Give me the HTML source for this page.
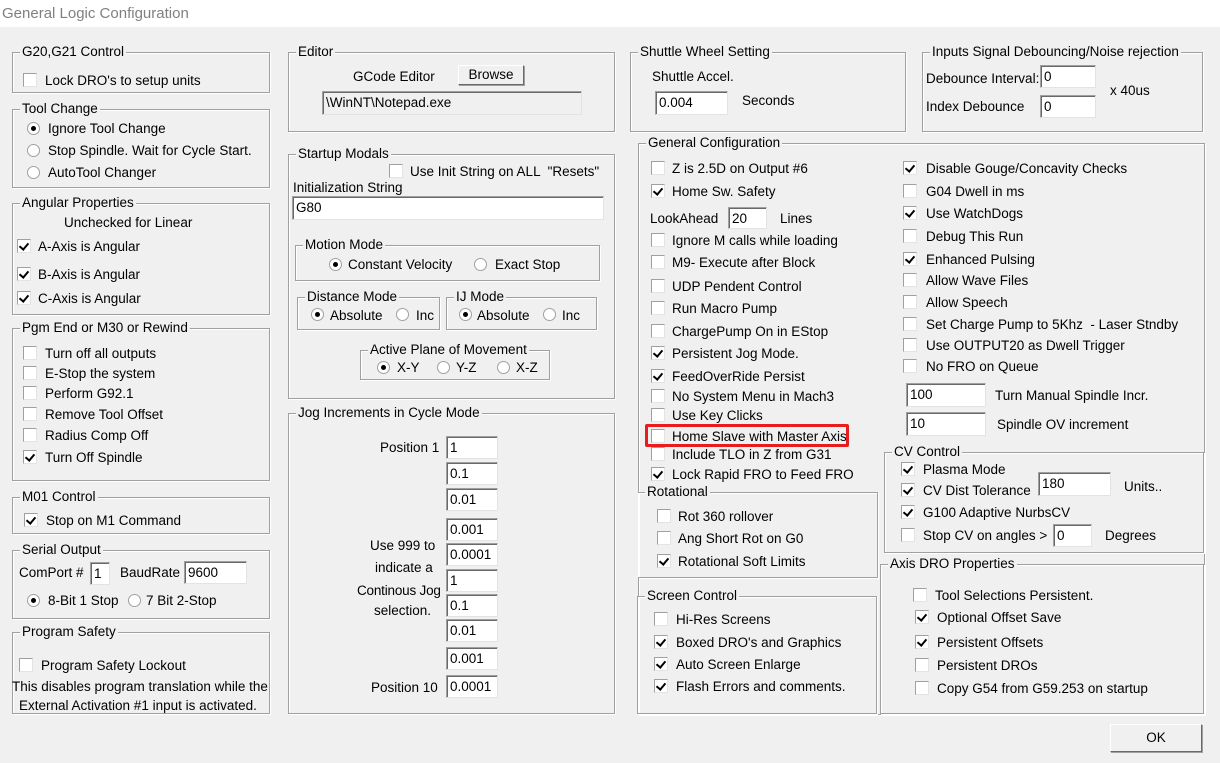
<!DOCTYPE html>
<html><head><meta charset="utf-8"><style>
*{box-sizing:border-box;margin:0;padding:0}
body{width:1220px;height:763px;background:#f0f0f0;position:relative;overflow:hidden;font-family:"Liberation Sans",sans-serif;font-size:13.5px;color:#000}
#tb{position:absolute;left:0;top:0;width:1220px;height:27px;background:#fff}
#tt{position:absolute;left:2px;top:5px;font-size:15px;color:#808080}
.g{position:absolute;border:1px solid #a0a0a0;box-shadow:inset 1px 1px 0 #fff,1px 1px 0 #fff}
.l{position:absolute;left:7px;top:-10px;background:#f0f0f0;padding:0 2px;line-height:18px;white-space:nowrap}
b{position:absolute;font-weight:normal;white-space:nowrap;line-height:18px;padding-top:1px}
i{position:absolute;width:14px;height:14px;background:#fff;border:1px solid #a0a0a0;border-right-color:#e3e3e3;border-bottom-color:#e3e3e3;font-style:normal}
i.k::after{content:"";position:absolute;left:3px;top:1px;width:4px;height:7px;border:solid #000;border-width:0 2px 2px 0;transform:rotate(40deg)}
u{position:absolute;width:13px;height:13px;border-radius:50%;background:#fff;border:1px solid #a0a0a0;text-decoration:none}
u.k::after{content:"";position:absolute;left:3px;top:3px;width:5px;height:5px;border-radius:50%;background:#000}
.e{position:absolute;background:#fff;border:1px solid #a0a0a0;border-right-color:#e3e3e3;border-bottom-color:#e3e3e3;box-shadow:inset 1px 1px 0 #696969;padding:2px 3px 0;line-height:18px;white-space:nowrap}
.btn{position:absolute;background:#f0f0f0;border:1px solid #fff;border-right-color:#696969;border-bottom-color:#696969;box-shadow:1px 1px 0 #a0a0a0;text-align:center;line-height:18px}
</style></head><body>
<div id="tb"><span id="tt">General Logic Configuration</span></div>

<div class="g" style="left:12px;top:52px;width:258px;height:41px"><span class="l">G20,G21 Control</span></div>
<i style="left:23px;top:73px"></i><b style="left:45px;top:71px">Lock DRO's to setup units</b>

<div class="g" style="left:12px;top:109px;width:258px;height:79px"><span class="l">Tool Change</span></div>
<u class="k" style="left:27px;top:122px"></u><b style="left:48px;top:119px">Ignore Tool Change</b>
<u style="left:27px;top:144px"></u><b style="left:48px;top:141px">Stop Spindle. Wait for Cycle Start.</b>
<u style="left:27px;top:166px"></u><b style="left:48px;top:163px">AutoTool Changer</b>

<div class="g" style="left:12px;top:203px;width:258px;height:112px"><span class="l">Angular Properties</span></div>
<b style="left:64px;top:213px">Unchecked for Linear</b>
<i class="k" style="left:17px;top:239px"></i><b style="left:38px;top:237px">A-Axis is Angular</b>
<i class="k" style="left:17px;top:267px"></i><b style="left:38px;top:265px">B-Axis is Angular</b>
<i class="k" style="left:17px;top:291px"></i><b style="left:38px;top:289px">C-Axis is Angular</b>

<div class="g" style="left:12px;top:328px;width:258px;height:153px"><span class="l">Pgm End or M30 or Rewind</span></div>
<i style="left:23px;top:346px"></i><b style="left:45px;top:344px">Turn off all outputs</b>
<i style="left:23px;top:366px"></i><b style="left:45px;top:364px">E-Stop the system</b>
<i style="left:23px;top:386px"></i><b style="left:45px;top:384px">Perform G92.1</b>
<i style="left:23px;top:407px"></i><b style="left:45px;top:405px">Remove Tool Offset</b>
<i style="left:23px;top:428px"></i><b style="left:45px;top:426px">Radius Comp Off</b>
<i class="k" style="left:23px;top:450px"></i><b style="left:45px;top:448px">Turn Off Spindle</b>

<div class="g" style="left:12px;top:497px;width:258px;height:37px"><span class="l">M01 Control</span></div>
<i class="k" style="left:24px;top:513px"></i><b style="left:46px;top:511px">Stop on M1 Command</b>

<div class="g" style="left:12px;top:550px;width:258px;height:69px"><span class="l">Serial Output</span></div>
<b style="left:19px;top:563px">ComPort #</b>
<div class="e" style="left:90px;top:562px;width:20px;height:23px">1</div>
<b style="left:120px;top:563px">BaudRate</b>
<div class="e" style="left:184px;top:561px;width:63px;height:23px">9600</div>
<u class="k" style="left:27px;top:594px"></u><b style="left:48px;top:591px">8-Bit 1 Stop</b>
<u style="left:128px;top:594px"></u><b style="left:146px;top:591px">7 Bit 2-Stop</b>

<div class="g" style="left:12px;top:632px;width:258px;height:82px"><span class="l">Program Safety</span></div>
<i style="left:19px;top:658px"></i><b style="left:41px;top:656px">Program Safety Lockout</b>
<b style="left:12px;top:677px">This disables program translation while the</b>
<b style="left:19px;top:696px">External Activation #1 input is activated.</b>

<div class="g" style="left:288px;top:52px;width:327px;height:80px"><span class="l">Editor</span></div>
<b style="left:353px;top:67px">GCode Editor</b>
<div class="btn" style="left:458px;top:65px;width:66px;height:20px">Browse</div>
<div class="e" style="left:322px;top:91px;width:260px;height:24px;background:#f0f0f0">\WinNT\Notepad.exe</div>

<div class="g" style="left:288px;top:154px;width:327px;height:245px"><span class="l">Startup Modals</span></div>
<i style="left:389px;top:164px"></i><b style="left:410px;top:162px">Use Init String on ALL &nbsp;"Resets"</b>
<b style="left:293px;top:178px">Initialization String</b>
<div class="e" style="left:292px;top:196px;width:312px;height:24px">G80</div>
<div class="g" style="left:295px;top:245px;width:305px;height:36px"><span class="l">Motion Mode</span></div>
<u class="k" style="left:329px;top:258px"></u><b style="left:348px;top:255px">Constant Velocity</b>
<u style="left:474px;top:258px"></u><b style="left:495px;top:255px">Exact Stop</b>
<div class="g" style="left:297px;top:297px;width:143px;height:33px"><span class="l">Distance Mode</span></div>
<u class="k" style="left:311px;top:308px"></u><b style="left:330px;top:306px">Absolute</b>
<u style="left:396px;top:308px"></u><b style="left:416px;top:306px">Inc</b>
<div class="g" style="left:446px;top:297px;width:151px;height:33px"><span class="l">IJ Mode</span></div>
<u class="k" style="left:459px;top:308px"></u><b style="left:477px;top:306px">Absolute</b>
<u style="left:543px;top:308px"></u><b style="left:562px;top:306px">Inc</b>
<div class="g" style="left:360px;top:350px;width:190px;height:30px"><span class="l">Active Plane of Movement</span></div>
<u class="k" style="left:377px;top:361px"></u><b style="left:397px;top:358px">X-Y</b>
<u style="left:437px;top:361px"></u><b style="left:456px;top:358px">Y-Z</b>
<u style="left:497px;top:361px"></u><b style="left:516px;top:358px">X-Z</b>

<div class="g" style="left:288px;top:413px;width:327px;height:301px"><span class="l">Jog Increments in Cycle Mode</span></div>
<b style="left:380px;top:438px">Position 1</b>
<div class="e" style="left:446px;top:436px;width:52px;height:23px">1</div>
<div class="e" style="left:446px;top:462px;width:52px;height:23px">0.1</div>
<div class="e" style="left:446px;top:488px;width:52px;height:23px">0.01</div>
<div class="e" style="left:446px;top:518px;width:52px;height:23px">0.001</div>
<div class="e" style="left:446px;top:543px;width:52px;height:23px">0.0001</div>
<div class="e" style="left:446px;top:569px;width:52px;height:23px">1</div>
<div class="e" style="left:446px;top:594px;width:52px;height:23px">0.1</div>
<div class="e" style="left:446px;top:619px;width:52px;height:23px">0.01</div>
<div class="e" style="left:446px;top:647px;width:52px;height:23px">0.001</div>
<div class="e" style="left:446px;top:675px;width:52px;height:23px">0.0001</div>
<b style="left:370px;top:536px">Use 999 to</b>
<b style="left:375px;top:558px">indicate a</b>
<b style="left:357px;top:581px;letter-spacing:-0.2px">Continous Jog</b>
<b style="left:374px;top:601px">selection.</b>
<b style="left:371px;top:678px">Position 10</b>

<div class="g" style="left:630px;top:52px;width:276px;height:80px"><span class="l">Shuttle Wheel Setting</span></div>
<b style="left:652px;top:67px">Shuttle Accel.</b>
<div class="e" style="left:655px;top:91px;width:73px;height:24px">0.004</div>
<b style="left:742px;top:91px">Seconds</b>

<div class="g" style="left:922px;top:52px;width:281px;height:80px"><span class="l">Inputs Signal Debouncing/Noise rejection</span></div>
<b style="left:926px;top:69px">Debounce Interval:</b>
<div class="e" style="left:1040px;top:65px;width:56px;height:23px">0</div>
<b style="left:926px;top:97px">Index Debounce</b>
<div class="e" style="left:1040px;top:95px;width:56px;height:23px">0</div>
<b style="left:1110px;top:81px">x 40us</b>

<div class="g" style="left:638px;top:143px;width:567px;height:572px"><span class="l">General Configuration</span></div>
<i style="left:651px;top:161px"></i><b style="left:672px;top:159px">Z is 2.5D on Output #6</b>
<i class="k" style="left:651px;top:184px"></i><b style="left:672px;top:182px">Home Sw. Safety</b>
<b style="left:650px;top:209px">LookAhead</b>
<div class="e" style="left:728px;top:207px;width:39px;height:22px">20</div>
<b style="left:780px;top:209px">Lines</b>
<i style="left:651px;top:233px"></i><b style="left:672px;top:231px">Ignore M calls while loading</b>
<i style="left:651px;top:255px"></i><b style="left:672px;top:253px">M9- Execute after Block</b>
<i style="left:651px;top:279px"></i><b style="left:672px;top:277px">UDP Pendent Control</b>
<i style="left:651px;top:301px"></i><b style="left:672px;top:299px">Run Macro Pump</b>
<i style="left:651px;top:324px"></i><b style="left:672px;top:322px">ChargePump On in EStop</b>
<i class="k" style="left:651px;top:346px"></i><b style="left:672px;top:344px">Persistent Jog Mode.</b>
<i class="k" style="left:651px;top:369px"></i><b style="left:672px;top:367px">FeedOverRide Persist</b>
<i style="left:651px;top:389px"></i><b style="left:672px;top:387px">No System Menu in Mach3</b>
<i style="left:651px;top:408px"></i><b style="left:672px;top:406px">Use Key Clicks</b>
<i style="left:651px;top:429px"></i><b style="left:672px;top:427px">Home Slave with Master Axis</b>
<div style="position:absolute;left:645px;top:424px;width:204px;height:23px;border:3px solid #e81c1c;border-radius:2px"></div>
<i style="left:651px;top:447px"></i><b style="left:672px;top:445px">Include TLO in Z from G31</b>
<i class="k" style="left:651px;top:467px"></i><b style="left:672px;top:465px">Lock Rapid FRO to Feed FRO</b>

<i class="k" style="left:903px;top:161px"></i><b style="left:926px;top:159px">Disable Gouge/Concavity Checks</b>
<i style="left:903px;top:184px"></i><b style="left:926px;top:182px">G04 Dwell in ms</b>
<i class="k" style="left:903px;top:206px"></i><b style="left:926px;top:204px">Use WatchDogs</b>
<i style="left:903px;top:229px"></i><b style="left:926px;top:227px">Debug This Run</b>
<i class="k" style="left:903px;top:252px"></i><b style="left:926px;top:250px">Enhanced Pulsing</b>
<i style="left:903px;top:273px"></i><b style="left:926px;top:271px">Allow Wave Files</b>
<i style="left:903px;top:295px"></i><b style="left:926px;top:293px">Allow Speech</b>
<i style="left:903px;top:317px"></i><b style="left:926px;top:315px">Set Charge Pump to 5Khz &nbsp;- Laser Stndby</b>
<i style="left:903px;top:338px"></i><b style="left:926px;top:336px">Use OUTPUT20 as Dwell Trigger</b>
<i style="left:903px;top:359px"></i><b style="left:926px;top:357px">No FRO on Queue</b>
<div class="e" style="left:906px;top:383px;width:80px;height:24px">100</div>
<b style="left:995px;top:386px">Turn Manual Spindle Incr.</b>
<div class="e" style="left:906px;top:412px;width:80px;height:24px">10</div>
<b style="left:997px;top:415px">Spindle OV increment</b>

<div class="g" style="left:638px;top:492px;width:240px;height:86px;border-left:none"><span class="l">Rotational</span></div>
<i style="left:657px;top:509px"></i><b style="left:678px;top:507px">Rot 360 rollover</b>
<i style="left:657px;top:531px"></i><b style="left:678px;top:529px">Ang Short Rot on G0</b>
<i class="k" style="left:657px;top:554px"></i><b style="left:678px;top:552px">Rotational Soft Limits</b>

<div class="g" style="left:637px;top:596px;width:240px;height:118px"><span class="l">Screen Control</span></div>
<i style="left:654px;top:612px"></i><b style="left:676px;top:610px">Hi-Res Screens</b>
<i class="k" style="left:654px;top:635px"></i><b style="left:676px;top:633px">Boxed DRO's and Graphics</b>
<i class="k" style="left:654px;top:657px"></i><b style="left:676px;top:655px">Auto Screen Enlarge</b>
<i class="k" style="left:654px;top:679px"></i><b style="left:676px;top:677px">Flash Errors and comments.</b>

<div class="g" style="left:884px;top:452px;width:320px;height:101px"><span class="l">CV Control</span></div>
<i class="k" style="left:901px;top:462px"></i><b style="left:923px;top:460px">Plasma Mode</b>
<i class="k" style="left:901px;top:483px"></i><b style="left:923px;top:481px">CV Dist Tolerance</b>
<div class="e" style="left:1038px;top:472px;width:73px;height:24px">180</div>
<b style="left:1124px;top:477px">Units..</b>
<i class="k" style="left:901px;top:505px"></i><b style="left:923px;top:503px">G100 Adaptive NurbsCV</b>
<i style="left:901px;top:528px"></i><b style="left:923px;top:526px">Stop CV on angles &gt;</b>
<div class="e" style="left:1053px;top:524px;width:39px;height:23px">0</div>
<b style="left:1105px;top:526px">Degrees</b>

<div class="g" style="left:880px;top:564px;width:324px;height:150px"><span class="l">Axis DRO Properties</span></div>
<i style="left:913px;top:588px"></i><b style="left:935px;top:586px">Tool Selections Persistent.</b>
<i class="k" style="left:915px;top:610px"></i><b style="left:937px;top:608px">Optional Offset Save</b>
<i class="k" style="left:915px;top:635px"></i><b style="left:937px;top:633px">Persistent Offsets</b>
<i style="left:915px;top:658px"></i><b style="left:937px;top:656px">Persistent DROs</b>
<i style="left:915px;top:681px"></i><b style="left:937px;top:679px">Copy G54 from G59.253 on startup</b>

<div class="btn" style="left:1110px;top:724px;width:92px;height:28px;line-height:26px">OK</div>
</body></html>
